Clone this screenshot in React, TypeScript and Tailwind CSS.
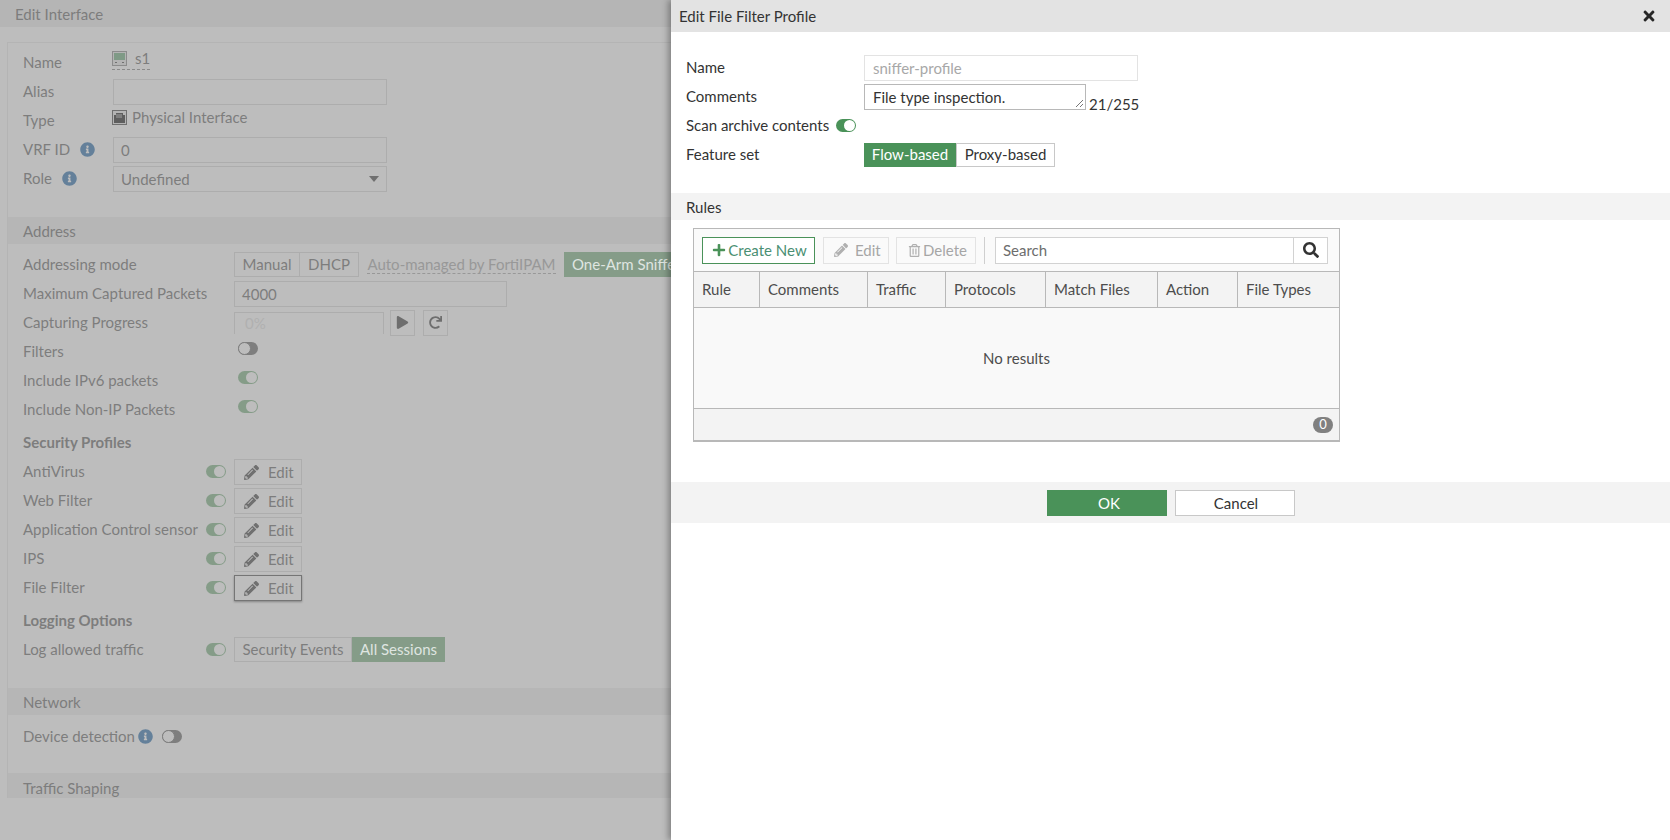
import React from "react";
import {
  FaInfoCircle,
  FaPencilAlt,
  FaPlay,
  FaPlus,
  FaRedo,
  FaRegTrashAlt,
  FaSearch,
  FaTimes,
} from "react-icons/fa";

const Toggle = ({ on, tone }: { on: boolean; tone: "muted" | "live" }) => {
  if (!on) {
    return (
      <span className="flex h-[13px] w-[20px] items-center justify-start rounded-full bg-[#7e7e7e]">
        <span className="h-[13px] w-[13px] rounded-full border border-[#7e7e7e] bg-[#bdbdbd]" />
      </span>
    );
  }
  return (
    <span
      className={
        tone === "live"
          ? "flex h-[13px] w-[20px] items-center justify-end rounded-full bg-[#4a9259] pr-[1px]"
          : "flex h-[13px] w-[20px] items-center justify-end rounded-full bg-[#859c88] pr-[1px]"
      }
    >
      <span
        className={
          tone === "live"
            ? "h-[11px] w-[11px] rounded-full bg-white"
            : "h-[11px] w-[11px] rounded-full bg-[#bdbdbd]"
        }
      />
    </span>
  );
};

const Info = () => <FaInfoCircle className="text-[15px] text-[#64809a]" />;

// top block of the form has a narrower label column than the rows below it
const TopRow = ({ label, children }: { label: React.ReactNode; children?: React.ReactNode }) => (
  <div className="flex h-[29px] items-center pl-[15px]">
    <div className="flex w-[90px] flex-none items-center gap-[10px]">{label}</div>
    {children}
  </div>
);

const Row = ({ label, children }: { label: React.ReactNode; children?: React.ReactNode }) => (
  <div className="flex h-[29px] items-center pl-[15px]">
    <div className="flex w-[211px] flex-none items-center gap-[8px]">{label}</div>
    {children}
  </div>
);

const EditButton = ({ focused }: { focused?: boolean }) => (
  <span
    className={
      focused
        ? "flex h-[26px] w-[68px] items-center gap-[9px] border border-[#757575] pl-[9px] pt-px text-[#7d7d7d] shadow-[0_1px_2px_rgba(0,0,0,0.3)]"
        : "flex h-[26px] w-[68px] items-center gap-[9px] border border-[#adadad] pl-[9px] pt-px text-[#7d7d7d]"
    }
  >
    <FaPencilAlt className="text-[15px] text-[#707070]" />
    Edit
  </span>
);

const ProfileRow = ({ label, focused }: { label: string; focused?: boolean }) => (
  <div className="flex h-[29px] items-center pl-[15px]">
    <span className="w-[183px] flex-none">{label}</span>
    <span className="w-[28px] flex-none">
      <Toggle on tone="muted" />
    </span>
    <EditButton focused={focused} />
  </div>
);

const Band = ({ label, short }: { label: string; short?: boolean }) => (
  <div
    className={
      short
        ? "h-[25px] bg-[#b6b6b6] pl-[15px] pt-[7px] leading-[17px]"
        : "h-[27px] bg-[#b6b6b6] pl-[15px] pt-[6px] leading-[17px]"
    }
  >
    {label}
  </div>
);

const InterfaceIcon = () => (
  <svg width="15" height="15" viewBox="0 0 15 15" className="flex-none">
    <rect x="0.5" y="0.5" width="14" height="14" fill="#b4b4b4" stroke="#8c8c8c" />
    <rect x="2" y="2" width="11" height="7" fill="#7f9a86" />
    <rect x="3" y="11" width="2" height="1" fill="#707070" />
    <rect x="10" y="11" width="2" height="1" fill="#707070" />
  </svg>
);

const PortIcon = () => (
  <svg width="15" height="15" viewBox="0 0 15 15" className="flex-none">
    <rect x="0.5" y="0.5" width="14" height="14" fill="#b4b4b4" stroke="#707070" />
    <path d="M2 13V5h2V3h7v2h2v8z" fill="#5e5e5e" />
    <path d="M5 4v4M7 4v4M9 4v4" stroke="#b4b4b4" strokeWidth="0.8" />
  </svg>
);

const InterfacePage = () => (
  <div className="h-[840px] w-[671px] flex-none overflow-hidden bg-[#bdbdbd] text-[#7d7d7d]">
    <div className="h-[27px] bg-[#b5b5b5] pl-[15px] pt-[6px] leading-[17px]">Edit Interface</div>
    <div className="ml-[7px] mt-[15px] h-[756px] overflow-hidden border-l border-t border-[#b4b4b4] pt-[5px]">
      <TopRow label="Name">
        <span className="-ml-[1px] -mt-[4px] flex items-center gap-[8px] border-b border-dashed border-[#8a8a8a] pb-[3px] leading-[15px]">
          <InterfaceIcon />
          s1
        </span>
      </TopRow>
      <TopRow label="Alias">
        <span className="h-[26px] w-[274px] border border-[#adadad]" />
      </TopRow>
      <TopRow label="Type">
        <span className="-ml-[1px] -mt-[6px] flex items-center gap-[5px] leading-[15px]">
          <PortIcon />
          Physical Interface
        </span>
      </TopRow>
      <TopRow
        label={
          <>
            VRF ID
            <Info />
          </>
        }
      >
        <span className="flex h-[26px] w-[274px] items-center border border-[#adadad] pl-[7px] pt-px">0</span>
      </TopRow>
      <TopRow
        label={
          <>
            Role
            <Info />
          </>
        }
      >
        <span className="flex h-[26px] w-[274px] items-center justify-between border border-[#adadad] pl-[7px] pr-[7px] pt-px">
          Undefined
          <span className="h-0 w-0 border-x-[5px] border-t-[6px] border-x-transparent border-t-[#707070]" />
        </span>
      </TopRow>

      <div className="mt-[24px]">
        <Band label="Address" />
      </div>
      <div className="pt-[6px]">
        <div className="flex h-[29px] items-center pl-[15px]">
          <span className="w-[211px] flex-none">Addressing mode</span>
          <div className="flex h-[25px] w-[500px] flex-none items-stretch whitespace-nowrap">
            <span className="flex w-[66px] items-center justify-center border border-[#adadad]">Manual</span>
            <span className="-ml-px flex w-[60px] items-center justify-center border border-[#adadad]">DHCP</span>
            <span className="flex w-[205px] items-center justify-center text-[#989898]">
              <span className="border-b border-dashed border-[#989898] leading-[17px]">Auto-managed by FortiIPAM</span>
            </span>
            <span className="flex flex-1 items-center bg-[#859c88] pl-[8px] text-[#dfe5e0]">One-Arm Sniffer</span>
          </div>
        </div>
        <Row label="Maximum Captured Packets">
          <span className="flex h-[26px] w-[273px] items-center border border-[#adadad] pl-[7px] pt-px">4000</span>
        </Row>
        <Row label="Capturing Progress">
          <span className="flex h-[22px] w-[150px] items-center border-x border-t border-[#adadad] pl-[10px] text-[#b0b0b0]">
            0%
          </span>
          <span className="ml-[6px] flex h-[26px] w-[25px] items-center justify-center border border-[#adadad]">
            <FaPlay className="text-[13px] text-[#6e6e6e]" />
          </span>
          <span className="ml-[8px] flex h-[26px] w-[25px] items-center justify-center border border-[#adadad]">
            <FaRedo className="text-[13px] text-[#6e6e6e]" />
          </span>
        </Row>
        <Row label="Filters">
          <span className="-mt-[6px] ml-[4px]">
            <Toggle on={false} tone="muted" />
          </span>
        </Row>
        <Row label="Include IPv6 packets">
          <span className="-mt-[6px] ml-[4px]">
            <Toggle on tone="muted" />
          </span>
        </Row>
        <Row label="Include Non-IP Packets">
          <span className="-mt-[6px] ml-[4px]">
            <Toggle on tone="muted" />
          </span>
        </Row>
        <div className="mt-[4px] flex h-[29px] items-center pl-[15px] font-bold">Security Profiles</div>
        <ProfileRow label="AntiVirus" />
        <ProfileRow label="Web Filter" />
        <ProfileRow label="Application Control sensor" />
        <ProfileRow label="IPS" />
        <ProfileRow label="File Filter" focused />
        <div className="mt-[4px] flex h-[29px] items-center pl-[15px] font-bold">Logging Options</div>
        <div className="flex h-[29px] items-center pl-[15px]">
          <span className="w-[183px] flex-none">Log allowed traffic</span>
          <span className="w-[28px] flex-none">
            <Toggle on tone="muted" />
          </span>
          <span className="flex h-[25px] w-[118px] items-center justify-center border border-[#adadad]">Security Events</span>
          <span className="flex h-[25px] w-[93px] items-center justify-center bg-[#859c88] text-[#dfe5e0]">All Sessions</span>
        </div>
      </div>

      <div className="mt-[24px]">
        <Band label="Network" />
      </div>
      <div className="mt-[7px] flex h-[29px] items-center pl-[15px]">
        <span>Device detection</span>
        <span className="ml-[3px]">
          <Info />
        </span>
        <span className="ml-[9px]">
          <Toggle on={false} tone="muted" />
        </span>
      </div>
      <div className="mt-[22px]">
        <Band label="Traffic Shaping" short />
      </div>
    </div>
  </div>
);

const FormRow = ({ label, children }: { label: React.ReactNode; children?: React.ReactNode }) => (
  <div className="flex h-[29px] items-center">
    <div className="flex w-[178px] flex-none items-center gap-[7px]">{label}</div>
    {children}
  </div>
);

const columns = [
  { name: "Rule", width: "w-[66px]" },
  { name: "Comments", width: "w-[108px]" },
  { name: "Traffic", width: "w-[78px]" },
  { name: "Protocols", width: "w-[100px]" },
  { name: "Match Files", width: "w-[112px]" },
  { name: "Action", width: "w-[80px]" },
  { name: "File Types", width: "flex-1" },
];

const RulesGrid = () => (
  <div className="ml-[22px] mt-[8px] h-[214px] w-[647px] border border-b-2 border-[#b8b8b8] bg-[#fafafa]">
    <div className="flex h-[43px] items-center gap-[8px] border-b border-[#b8b8b8] pl-[8px] pr-[11px]">
      <span className="flex h-[27px] w-[113px] items-center justify-center gap-[2px] border border-[#4a9259] bg-white pl-[2px] text-[#4a8f73]">
        <FaPlus className="text-[14px] text-[#4a9259]" />
        Create New
      </span>
      <span className="flex h-[27px] w-[66px] items-center gap-[7px] border border-[#e3e3e3] pl-[10px] text-[#a6a6a6]">
        <FaPencilAlt className="text-[14px] text-[#b0b0b0]" />
        Edit
      </span>
      <span className="-ml-px flex h-[27px] w-[80px] items-center gap-[2px] border border-[#e3e3e3] pl-[11px] text-[#a6a6a6]">
        <FaRegTrashAlt className="text-[13px] text-[#b0b0b0]" />
        Delete
      </span>
      <span className="h-[27px] w-px bg-[#cfcfcf]" />
      <span className="ml-[2px] flex h-[27px] flex-1 items-center border border-[#d2d2d2] bg-white">
        <span className="flex-1 pl-[7px] text-[#6d6d6d]">Search</span>
        <span className="flex h-full w-[34px] items-center justify-center border-l border-[#d2d2d2]">
          <FaSearch className="text-[16px] text-[#333]" />
        </span>
      </span>
    </div>
    <div className="flex h-[36px] border-b border-[#b8b8b8] bg-[#f3f3f3] text-[#4d4d4d]">
      {columns.map((col, i) => (
        <div
          key={col.name}
          className={
            i < columns.length - 1
              ? `flex flex-none items-center border-r border-[#b8b8b8] pl-[8px] ${col.width}`
              : `flex items-center pl-[8px] ${col.width}`
          }
        >
          {col.name}
        </div>
      ))}
    </div>
    <div className="flex h-[101px] items-center justify-center border-b border-[#b8b8b8] bg-[#f9f9f9] text-[#4d4d4d]">
      No results
    </div>
    <div className="flex h-[31px] items-center justify-end bg-[#f3f3f3] pr-[6px]">
      <span className="flex h-[16px] w-[20px] items-center justify-center rounded-full bg-[#808080] text-[13px] leading-none text-white">
        0
      </span>
    </div>
  </div>
);

const FilterProfilePanel = () => (
  <div className="h-[840px] flex-1 bg-white text-[#333] shadow-[-3px_0_6px_rgba(0,0,0,0.3)]">
    <div className="flex h-[32px] items-center justify-between bg-[#e3e3e3] pl-[8px] pr-[13px]">
      <span>Edit File Filter Profile</span>
      <FaTimes className="text-[16px] text-[#262626]" />
    </div>
    <div className="pl-[15px] pt-[21px]">
      <FormRow label="Name">
        <span className="flex h-[26px] w-[274px] items-center border-[1.5px] border-[#e3e3e3] pl-[8px] pt-px text-[#a8a8a8]">
          sniffer-profile
        </span>
      </FormRow>
      <FormRow label="Comments">
        <span className="relative flex h-[26px] w-[222px] items-center border border-[#b8b8b8] pl-[8px] pt-px">
          File type inspection.
          <svg width="10" height="10" viewBox="0 0 10 10" className="absolute bottom-px right-px">
            <path d="M9 2L2 9M9 6L6 9" stroke="#777" strokeWidth="1" />
          </svg>
        </span>
        <span className="ml-[3px] mt-[15px] leading-[17px]">21/255</span>
      </FormRow>
      <FormRow
        label={
          <>
            Scan archive contents
            <Toggle on tone="live" />
          </>
        }
      />
      <FormRow label="Feature set">
        <span className="flex h-[24px] w-[92px] items-center justify-center bg-[#4a9259] text-white">Flow-based</span>
        <span className="flex h-[24px] w-[99px] items-center justify-center border border-[#c8c8c8]">Proxy-based</span>
      </FormRow>
    </div>
    <div className="mt-[24px] h-[27px] bg-[#f3f3f3] pl-[15px] pt-[6px] leading-[17px]">Rules</div>
    <RulesGrid />
    <div className="mt-[40px] flex h-[41px] items-center justify-center gap-[8px] bg-[#f3f3f3]">
      <span className="flex h-[26px] w-[120px] items-center justify-center bg-[#4a9259] pl-[5px] pt-px text-white">OK</span>
      <span className="flex h-[26px] w-[120px] items-center justify-center border border-[#c8c8c8] bg-white pl-[3px] pt-px">Cancel</span>
    </div>
  </div>
);

const App = () => {
  return (
    <div className="flex h-[840px] w-full overflow-hidden font-['Lato',sans-serif] text-[15px]">
      <InterfacePage />
      <FilterProfilePanel />
    </div>
  );
};

export default App;
